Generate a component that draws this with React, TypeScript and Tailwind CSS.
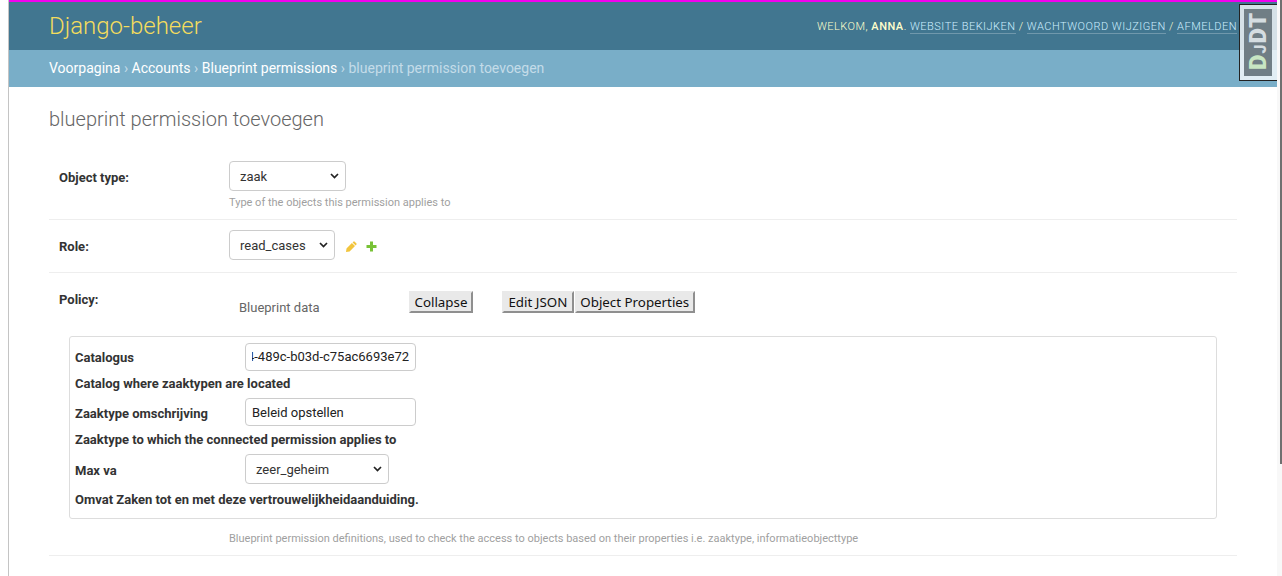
import React from "react";

const Chevron = () => (
  <svg width="9" height="6" viewBox="0 0 9 6" fill="none" stroke="#222" strokeWidth="1.7" className="absolute right-[6px] top-1/2 -mt-[3px]">
    <path d="M1 1l3.5 3.5L8 1" />
  </svg>
);

const Select = ({ w, v }: { w: string; v: string }) => (
  <div className={`relative h-[30px] ${w} flex items-center rounded-[4px] border border-[#cccccc] bg-white pl-[10px] pt-[1px] text-[13px] text-[#333]`}>
    <span>{v}</span>
    <Chevron />
  </div>
);

export default function App() {
  return (
    <div className="relative h-[576px] w-[1282px] overflow-hidden bg-white font-['Roboto',sans-serif] text-[14px] text-[#333]">
      <div className="flex h-full w-[1277px]">
        <div className="h-full w-[9px] shrink-0 border-r border-[#c4c4c4] bg-white" />
        <div className="min-w-0 flex-1">
          <div className="h-[2px] bg-[#f000f0]" />
          <header className="flex h-[48px] items-center justify-between bg-[#417690] px-[40px]">
            <div className="text-[24px] font-light leading-[48px] text-[#f5dd5d]">Django-beheer</div>
            <div className="pt-[2px] text-[11px] font-light tracking-[0.5px] text-[#ffffcc]">
              WELKOM, <strong className="font-medium">ANNA</strong>.{" "}
              <span className="border-b border-[rgba(255,255,255,0.25)] text-[#cceeff]">WEBSITE BEKIJKEN</span> /{" "}
              <span className="border-b border-[rgba(255,255,255,0.25)] text-[#cceeff]">WACHTWOORD WIJZIGEN</span> /{" "}
              <span className="border-b border-[rgba(255,255,255,0.25)] text-[#cceeff]">AFMELDEN</span>
            </div>
          </header>
          <nav className="flex h-[37px] items-center bg-[#79aec8] px-[40px] text-[14px] text-[#c4dce8]">
            <span className="text-white">Voorpagina</span>
            <span>&nbsp;›&nbsp;</span>
            <span className="text-white">Accounts</span>
            <span>&nbsp;›&nbsp;</span>
            <span className="text-white">Blueprint permissions</span>
            <span>&nbsp;›&nbsp;blueprint permission toevoegen</span>
          </nav>
          <main className="px-[40px] pt-[20px]">
            <h1 className="mb-[20px] text-[20px] font-light leading-[24px] text-[#666]">blueprint permission toevoegen</h1>
            <section>
              <div className="flex h-[69px] border-b border-[#eeeeee] pl-[10px] pt-[10px]">
                <label className="w-[170px] pt-[9px] text-[13px] font-bold leading-[16px]">Object type:</label>
                <div>
                  <Select w="w-[117px]" v="zaak" />
                  <p className="mt-[5px] text-[11px] leading-[14px] text-[#9f9f9f]">Type of the objects this permission applies to</p>
                </div>
              </div>
              <div className="flex h-[53px] border-b border-[#eeeeee] pl-[10px] pt-[10px]">
                <label className="w-[170px] pt-[9px] text-[13px] font-bold leading-[16px]">Role:</label>
                <Select w="w-[106px]" v="read_cases" />
                <div className="ml-[11px] flex items-center gap-[9px] self-start pt-[11px]">
                  <svg width="11" height="11" viewBox="0 0 11 11" fill="#f2c53d">
                    <path d="M7.3.7a1 1 0 0 1 1.4 0l1.6 1.6a1 1 0 0 1 0 1.4l-.7.7-3-3zM5.9 2l3.1 3.1L3.6 10.5 0 11l.5-3.6z" />
                  </svg>
                  <svg width="11" height="11" viewBox="0 0 11 11" fill="#78c236">
                    <path d="M4 0.5h3V4h3.5v3H7v3.5H4V7H0.5V4H4z" />
                  </svg>
                </div>
              </div>
              <div className="border-b border-[#eeeeee] pt-[10px] pb-[9px]">
                <div className="relative h-[53px] pl-[10px]">
                  <label className="absolute left-[10px] top-[9px] text-[13px] font-bold leading-[16px]">Policy:</label>
                  <div className="flex items-start pl-[170px]">
                    <span className="w-[180px] pl-[10px] pt-[17px] text-[13px] leading-[16px] text-[#666]">Blueprint data</span>
                    <div className="mt-[8px]"><Btn label="Collapse" px="px-[3.5px]" /></div>
                    <div className="ml-[29px] mt-[8px] flex gap-[1px]">
                      <Btn label="Edit JSON" px="px-[4.5px]" />
                      <Btn label="Object Properties" px="px-[3.5px]" />
                    </div>
                  </div>
                </div>
                <div className="ml-[20px] mr-[20px] h-[183px] rounded-[3px] border border-[#dddddd] pl-[5px] pt-[6px] text-[13px] font-bold leading-[16px]">
                  <div className="flex h-[28px] items-center">
                    <span className="w-[170px] pt-[2px]">Catalogus</span>
                    <div className="h-[28px] w-[171px] rounded-[4px] border border-[#cccccc] px-[6px] font-normal text-[#222]">
                      <div className="flex h-full items-center justify-end overflow-hidden whitespace-nowrap">4-489c-b03d-c75ac6693e72</div>
                    </div>
                  </div>
                  <div className="mt-[5px] h-[16px]">Catalog where zaaktypen are located</div>
                  <div className="mt-[6px] flex h-[28px] items-center">
                    <span className="w-[170px] pt-[4px]">Zaaktype omschrijving</span>
                    <div className="flex h-[28px] w-[171px] items-center rounded-[4px] border border-[#cccccc] pl-[6px] pt-[2px] font-normal text-[#222]">Beleid opstellen</div>
                  </div>
                  <div className="mt-[6px] h-[16px]">Zaaktype to which the connected permission applies to</div>
                  <div className="mt-[6px] flex h-[30px] items-center">
                    <span className="w-[170px] pt-[4px]">Max va</span>
                    <div className="font-normal"><Select w="w-[144px]" v="zeer_geheim" /></div>
                  </div>
                  <div className="mt-[8px] h-[16px]">Omvat Zaken tot en met deze vertrouwelijkheidaanduiding.</div>
                </div>
                <p className="mt-[13px] pl-[180px] text-[11px] leading-[14px] text-[#9f9f9f]">Blueprint permission definitions, used to check the access to objects based on their properties i.e. zaaktype, informatieobjecttype</p>
              </div>
            </section>
          </main>
        </div>
      </div>
      <aside className="absolute left-[1239px] top-[4px] flex h-[77px] w-[38px] border-y border-l border-[#222] bg-[rgba(255,255,255,0.78)] py-[4px] pl-[4px] pr-[5px]">
        <div className="flex h-full w-full items-center justify-center bg-[#707e85] pb-[3px]">
          <span className="-rotate-90 whitespace-nowrap font-['Roboto',sans-serif] text-[24px] font-black leading-none tracking-[1px] text-[#d5dde1]">
            <span className="text-[#c8e6c3]">D</span>
            <span className="text-[16px]">J</span>DT
          </span>
        </div>
      </aside>
      <div className="absolute right-0 top-0 h-full w-[5px] bg-[#f8f8f8]">
        <div className="ml-auto h-[464px] w-[2px] bg-[#707070]" />
      </div>
    </div>
  );
}

function Btn({ label, px }: { label: string; px: string }) {
  return (
    <button className={`h-[22px] border-2 border-[#e9e9e9] border-r-[#8f8f8f] border-b-[#8f8f8f] bg-[#e9e9e9] ${px} pt-[1px] font-['Noto_Sans',sans-serif] text-[13.33px] leading-none text-[#111]`}>
      {label}
    </button>
  );
}
